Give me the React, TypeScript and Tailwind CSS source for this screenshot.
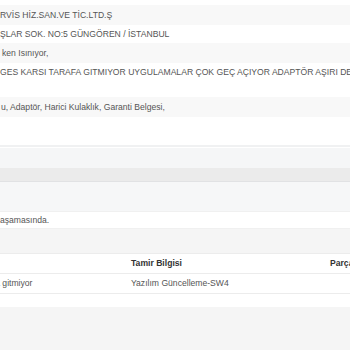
export default function App() {
  const info = [
    { text: "RVİS HİZ.SAN.VE TİC.LTD.Ş", h: "h-[20px]", bg: "bg-[#f8f8f8]" },
    { text: "ŞLAR SOK. NO:5 GÜNGÖREN / İSTANBUL", h: "h-[18px]", bg: "bg-white" },
    { text: "ken Isınıyor,", h: "h-[20px] pt-[1px]", bg: "bg-[#f8f8f8]", pl: "pl-[2px]" },
    {
      text: "GES KARSI TARAFA GITMIYOR UYGULAMALAR ÇOK GEÇ AÇIYOR ADAPTÖR AŞIRI DERECEDE ISINIYOR",
      h: "h-[34px] items-start pt-[5px]",
      bg: "bg-white",
    },
    { text: "u, Adaptör, Harici Kulaklık, Garanti Belgesi,", h: "h-[20px]", bg: "bg-[#f8f8f8]", pl: "pl-[1px]" },
  ];

  return (
    <div className="w-[350px] h-[350px] overflow-hidden bg-white text-[8.6px] leading-none text-[#555] font-['Liberation_Sans',Arial,sans-serif]">
      <div className="h-[5px]" />
      {info.map((r, i) => (
        <div key={i} className={`flex items-center whitespace-nowrap ${r.h} ${r.bg} ${r.pl ?? ""}`}>
          {r.text}
        </div>
      ))}
      <div className="h-[28px]" />
      <div className="h-[3px] border-t-2 border-[#f0f1f2]" />
      <div className="h-[20px] bg-[#f5f6f7]" />
      <div className="h-[14px] bg-[#ebebeb] border-b border-[#e1e2e4]" />
      <div className="h-[29px] bg-[#f6f7f8]" />
      <div className="h-[18px] bg-white border-y border-[#f0f0f0] flex items-center whitespace-nowrap">
        aşamasında.
      </div>
      <div className="h-[24px] bg-[#f5f5f5]" />
      <div className="h-[21px] bg-white border-y border-[#ececec] flex items-center whitespace-nowrap font-bold text-[#333]">
        <span className="w-[131px] shrink-0" />
        <span className="w-[199px] shrink-0">Tamir Bilgisi</span>
        <span>Parça</span>
      </div>
      <div className="h-[20px] bg-white border-b border-[#ececec] flex items-center whitespace-nowrap">
        <span className="w-[131px] shrink-0 overflow-hidden">
          <span className="ml-[-22px]">tarafa gitmiyor</span>
        </span>
        <span>Yazılım Güncelleme-SW4</span>
      </div>
      <div className="h-[13px] bg-white" />
      <div className="h-[52px] bg-[#f5f5f5]" />
    </div>
  );
}
